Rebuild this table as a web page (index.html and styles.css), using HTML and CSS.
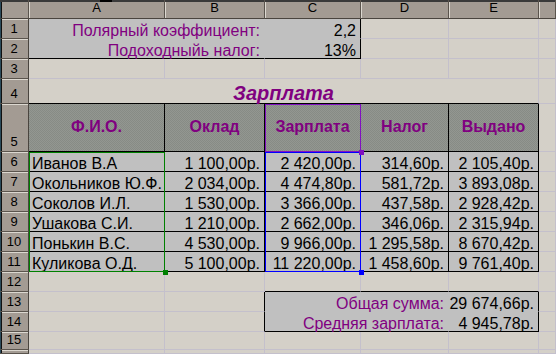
FILE: index.html
```html
<!DOCTYPE html>
<html lang="ru">
<head>
<meta charset="utf-8">
<title>Зарплата</title>
<link rel="stylesheet" href="styles.css">
</head>
<body>
<div class="sheet">
  <div class="corner"></div>
  <div class="ch">A</div><div class="ch">B</div><div class="ch">C</div><div class="ch">D</div><div class="ch">E</div><div class="ch"></div>

  <div class="rh">1</div>
  <div class="c fill r pur span2">Полярный коэффициент:</div>
  <div class="c fill r br">2,2</div>
  <div class="c"></div><div class="c"></div><div class="c"></div>

  <div class="rh">2</div>
  <div class="c fill r pur span2 bb">Подоходныйь налог:</div>
  <div class="c fill r br bb">13%</div>
  <div class="c"></div><div class="c"></div><div class="c"></div>

  <div class="rh">3</div>
  <div class="c"></div><div class="c"></div><div class="c"></div><div class="c"></div><div class="c"></div><div class="c"></div>

  <div class="rh">4</div>
  <div class="c title span5 bb">Зарплата</div>
  <div class="c"></div>

  <div class="rh">5</div>
  <div class="c hd br bb">Ф.И.О.</div>
  <div class="c hd br bb">Оклад</div>
  <div class="c hd br bb">Зарплата</div>
  <div class="c hd br bb">Налог</div>
  <div class="c hd br bb">Выдано</div>
  <div class="c"></div>

  <div class="rh">6</div>
  <div class="c fill br bb">Иванов В.А</div>
  <div class="c fill r br bb">1&nbsp;100,00р.</div>
  <div class="c fill r br bb">2&nbsp;420,00р.</div>
  <div class="c fill r br bb">314,60р.</div>
  <div class="c fill r br bb">2&nbsp;105,40р.</div>
  <div class="c"></div>

  <div class="rh">7</div>
  <div class="c fill br bb">Окольников Ю.Ф.</div>
  <div class="c fill r br bb">2&nbsp;034,00р.</div>
  <div class="c fill r br bb">4&nbsp;474,80р.</div>
  <div class="c fill r br bb">581,72р.</div>
  <div class="c fill r br bb">3&nbsp;893,08р.</div>
  <div class="c"></div>

  <div class="rh">8</div>
  <div class="c fill br bb">Соколов И.Л.</div>
  <div class="c fill r br bb">1&nbsp;530,00р.</div>
  <div class="c fill r br bb">3&nbsp;366,00р.</div>
  <div class="c fill r br bb">437,58р.</div>
  <div class="c fill r br bb">2&nbsp;928,42р.</div>
  <div class="c"></div>

  <div class="rh">9</div>
  <div class="c fill br bb">Ушакова С.И.</div>
  <div class="c fill r br bb">1&nbsp;210,00р.</div>
  <div class="c fill r br bb">2&nbsp;662,00р.</div>
  <div class="c fill r br bb">346,06р.</div>
  <div class="c fill r br bb">2&nbsp;315,94р.</div>
  <div class="c"></div>

  <div class="rh">10</div>
  <div class="c fill br bb">Понькин В.С.</div>
  <div class="c fill r br bb">4&nbsp;530,00р.</div>
  <div class="c fill r br bb">9&nbsp;966,00р.</div>
  <div class="c fill r br bb">1&nbsp;295,58р.</div>
  <div class="c fill r br bb">8&nbsp;670,42р.</div>
  <div class="c"></div>

  <div class="rh">11</div>
  <div class="c fill br bb">Куликова О.Д.</div>
  <div class="c fill r br bb">5&nbsp;100,00р.</div>
  <div class="c fill r br bb">11&nbsp;220,00р.</div>
  <div class="c fill r br bb">1&nbsp;458,60р.</div>
  <div class="c fill r br bb">9&nbsp;761,40р.</div>
  <div class="c"></div>

  <div class="rh">12</div>
  <div class="c"></div><div class="c"></div>
  <div class="c bb"></div><div class="c bb"></div><div class="c bb"></div>
  <div class="c"></div>

  <div class="rh">13</div>
  <div class="c"></div><div class="c br"></div>
  <div class="c fill r pur span2">Общая сумма:</div>
  <div class="c fill r br">29&nbsp;674,66р.</div>
  <div class="c"></div>

  <div class="rh">14</div>
  <div class="c"></div><div class="c br"></div>
  <div class="c fill r pur span2 bb">Средняя зарплата:</div>
  <div class="c fill r br bb">4&nbsp;945,78р.</div>
  <div class="c"></div>

  <div class="rh">15</div>
  <div class="c"></div><div class="c"></div><div class="c"></div><div class="c"></div><div class="c"></div><div class="c"></div>

  <div class="rh"></div>
  <div class="c"></div><div class="c"></div><div class="c"></div><div class="c"></div><div class="c"></div><div class="c"></div>

  <span class="topmark"></span>
  <div class="sel sel-green"><span class="handle"></span></div>
  <div class="sel sel-blue"><span class="handle"></span></div>
  <div class="sel sel-purple"><span class="handle"></span></div>
</div>
</body>
</html>
```

FILE: styles.css
```css
:root {
  --bg: #d4d0c8;
  --grid: #c4c0cc;
  --hdr: #a39b93;
  --hdr-dark: #5a544d;
  --hdr-light: #dcd8d0;
  --silver: #c0c0c0;
  --purple: #800080;
}

html, body {
  margin: 0;
  padding: 0;
  background: var(--bg);
}

.sheet {
  position: relative;
  width: 556px;
  height: 354px;
  overflow: hidden;
  display: grid;
  grid-template-columns: 29px 136px 100px 96px 88px 90px 1fr;
  grid-template-rows: 19px 20px 20px 20px 25px 48px repeat(9, 20px) 18px 1fr;
  font-family: "Liberation Sans", Arial, sans-serif;
  font-size: 16px;
  color: #000;
  background: var(--bg);
}

.corner,
.ch,
.rh {
  box-sizing: border-box;
  background: var(--hdr);
  font-size: 13px;
  line-height: 13px;
  display: flex;
  justify-content: center;
  align-items: flex-end;
}

.corner {
  border-right: 1px solid var(--hdr-dark);
  border-bottom: 1px solid #4a453f;
  box-shadow: inset 0 2px #3a3a3a, inset 1px 0 #2a4a5a, inset 2px 0 #101010;
}

.ch {
  border-right: 1px solid var(--hdr-dark);
  border-bottom: 1px solid #4a453f;
  box-shadow: inset 0 2px #3a3a3a, inset 1px 0 var(--hdr-light);
  padding-bottom: 4px;
}

.rh {
  border-right: 1px solid #4a453f;
  border-bottom: 1px solid var(--hdr-dark);
  box-shadow: inset 1px 0 #2a4a5a, inset 2px 0 #101010, inset 0 1px var(--hdr-light);
  padding-bottom: 3px;
}

.c {
  box-sizing: border-box;
  border-right: 1px solid var(--grid);
  border-bottom: 1px solid var(--grid);
  display: flex;
  align-items: flex-end;
  padding: 0 3px;
  line-height: 15px;
  white-space: nowrap;
  min-width: 0;
}

.r { justify-content: flex-end; padding-right: 4px; }

.fill {
  background: var(--silver);
  border-color: transparent;
}

.pur { color: var(--purple); }

.span2 { grid-column: span 2; }
.span5 { grid-column: span 5; }

.br { border-right-color: #000; }
.bb { border-bottom-color: #000; }

.title {
  justify-content: center;
  color: var(--purple);
  font-weight: bold;
  font-style: italic;
  font-size: 20px;
  line-height: 18px;
  padding-bottom: 1px;
}

.hd {
  background-color: #8c908a;
  background-image: repeating-conic-gradient(#878b85 0 25%, #939791 0 50%);
  background-size: 2px 2px;
  color: var(--purple);
  font-weight: bold;
  justify-content: center;
  align-items: center;
  line-height: 16px;
  padding-bottom: 2px;
}

.topmark {
  position: absolute;
  left: 100px;
  top: 0;
  width: 12px;
  height: 2px;
  background: #000;
}

.sel {
  position: absolute;
  box-sizing: border-box;
  border: 1px solid;
  pointer-events: none;
}

.sel-green {
  left: 29px;
  top: 152px;
  width: 136px;
  height: 120px;
  border-color: #008000;
}

.sel-blue {
  left: 265px;
  top: 152px;
  width: 96px;
  height: 120px;
  border-color: #0000ff;
}

.sel-purple {
  left: 265px;
  top: 104px;
  width: 96px;
  height: 48px;
  border-color: #8010c0;
}

.handle {
  position: absolute;
  right: -4px;
  bottom: -4px;
  width: 5px;
  height: 5px;
  background: inherit;
}

.sel-green .handle { background: #008000; }
.sel-blue .handle { background: #0000ff; }
.sel-purple .handle { background: #8010c0; }
```
